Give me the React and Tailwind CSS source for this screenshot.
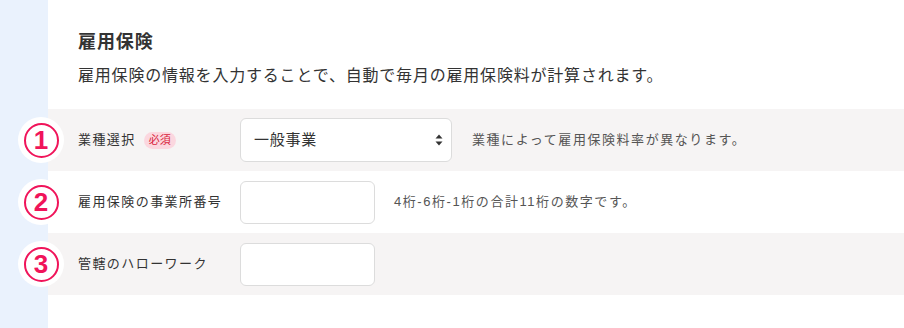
const FONT = '"Liberation Sans", "Noto Sans CJK JP", sans-serif'

const ROWS = [
  { n: '1', label: '業種選択', required: true, kind: 'select', hint: '業種によって雇用保険料率が異なります。', bg: 'bg-[#f6f4f4]' },
  { n: '2', label: '雇用保険の事業所番号', kind: 'input', hint: '4桁-6桁-1桁の合計11桁の数字です。', bg: 'bg-white' },
  { n: '3', label: '管轄のハローワーク', kind: 'input', bg: 'bg-[#f6f4f4]' },
]

function StepMark({ n }) {
  return (
    <div className="absolute left-[-30px] top-1/2 flex h-[46px] w-[46px] -translate-y-1/2 items-center justify-center rounded-full bg-white">
      <div className="flex h-[35px] w-[35px] items-center justify-center rounded-full border-2 border-[#f0145a] text-[26px] font-bold leading-none text-[#f0145a]">
        {n}
      </div>
    </div>
  )
}

export default function App() {
  return (
    <div className="flex h-[328px] w-[904px] overflow-hidden bg-white text-[#333]" style={{ fontFamily: FONT }}>
      <div className="w-[48px] shrink-0 bg-[#eaf2fd]" />
      <div className="flex-1">
        <section className="px-[30px] pt-[30px]">
          <h2 className="text-[18px] font-bold leading-[24px] tracking-wider">雇用保険</h2>
          <p className="mt-[10px] text-[16px] leading-[24px] tracking-wider">
            雇用保険の情報を入力することで、自動で毎月の雇用保険料が計算されます。
          </p>
        </section>

        <ul className="mt-[21px]">
          {ROWS.map((r) => (
            <li key={r.n} className={`relative flex h-[62px] items-center pl-[30px] ${r.bg}`}>
              <StepMark n={r.n} />
              <div className="flex w-[162px] items-center gap-[8px] text-[13px] tracking-[0.11em]">
                <span>{r.label}</span>
                {r.required && (
                  <span className="rounded-full bg-[#fbd7df] px-[5px] text-[11px] leading-[17px] tracking-normal text-[#d81e3c]">
                    必須
                  </span>
                )}
              </div>
              {r.kind === 'select' ? (
                <div className="flex h-[44px] w-[212px] items-center justify-between rounded-[6px] border border-[#dcdcdc] bg-white pl-[13px] pr-[8px]">
                  <span className="text-[15px] tracking-wider text-[#333]">一般事業</span>
                  <svg width="8" height="12" viewBox="0 0 8 12" className="fill-[#333]">
                    <path d="M4 0.5 L7.5 4.5 H0.5 Z" />
                    <path d="M4 11.5 L7.5 7.5 H0.5 Z" />
                  </svg>
                </div>
              ) : (
                <div className="h-[43px] w-[135px] rounded-[6px] border border-[#dcdcdc] bg-white" />
              )}
              {r.hint && (
                <span className={`text-[13px] tracking-[0.12em] text-[#555] ${r.kind === 'select' ? 'ml-[20px]' : 'ml-[19px]'}`}>
                  {r.hint}
                </span>
              )}
            </li>
          ))}
        </ul>
      </div>
    </div>
  )
}
